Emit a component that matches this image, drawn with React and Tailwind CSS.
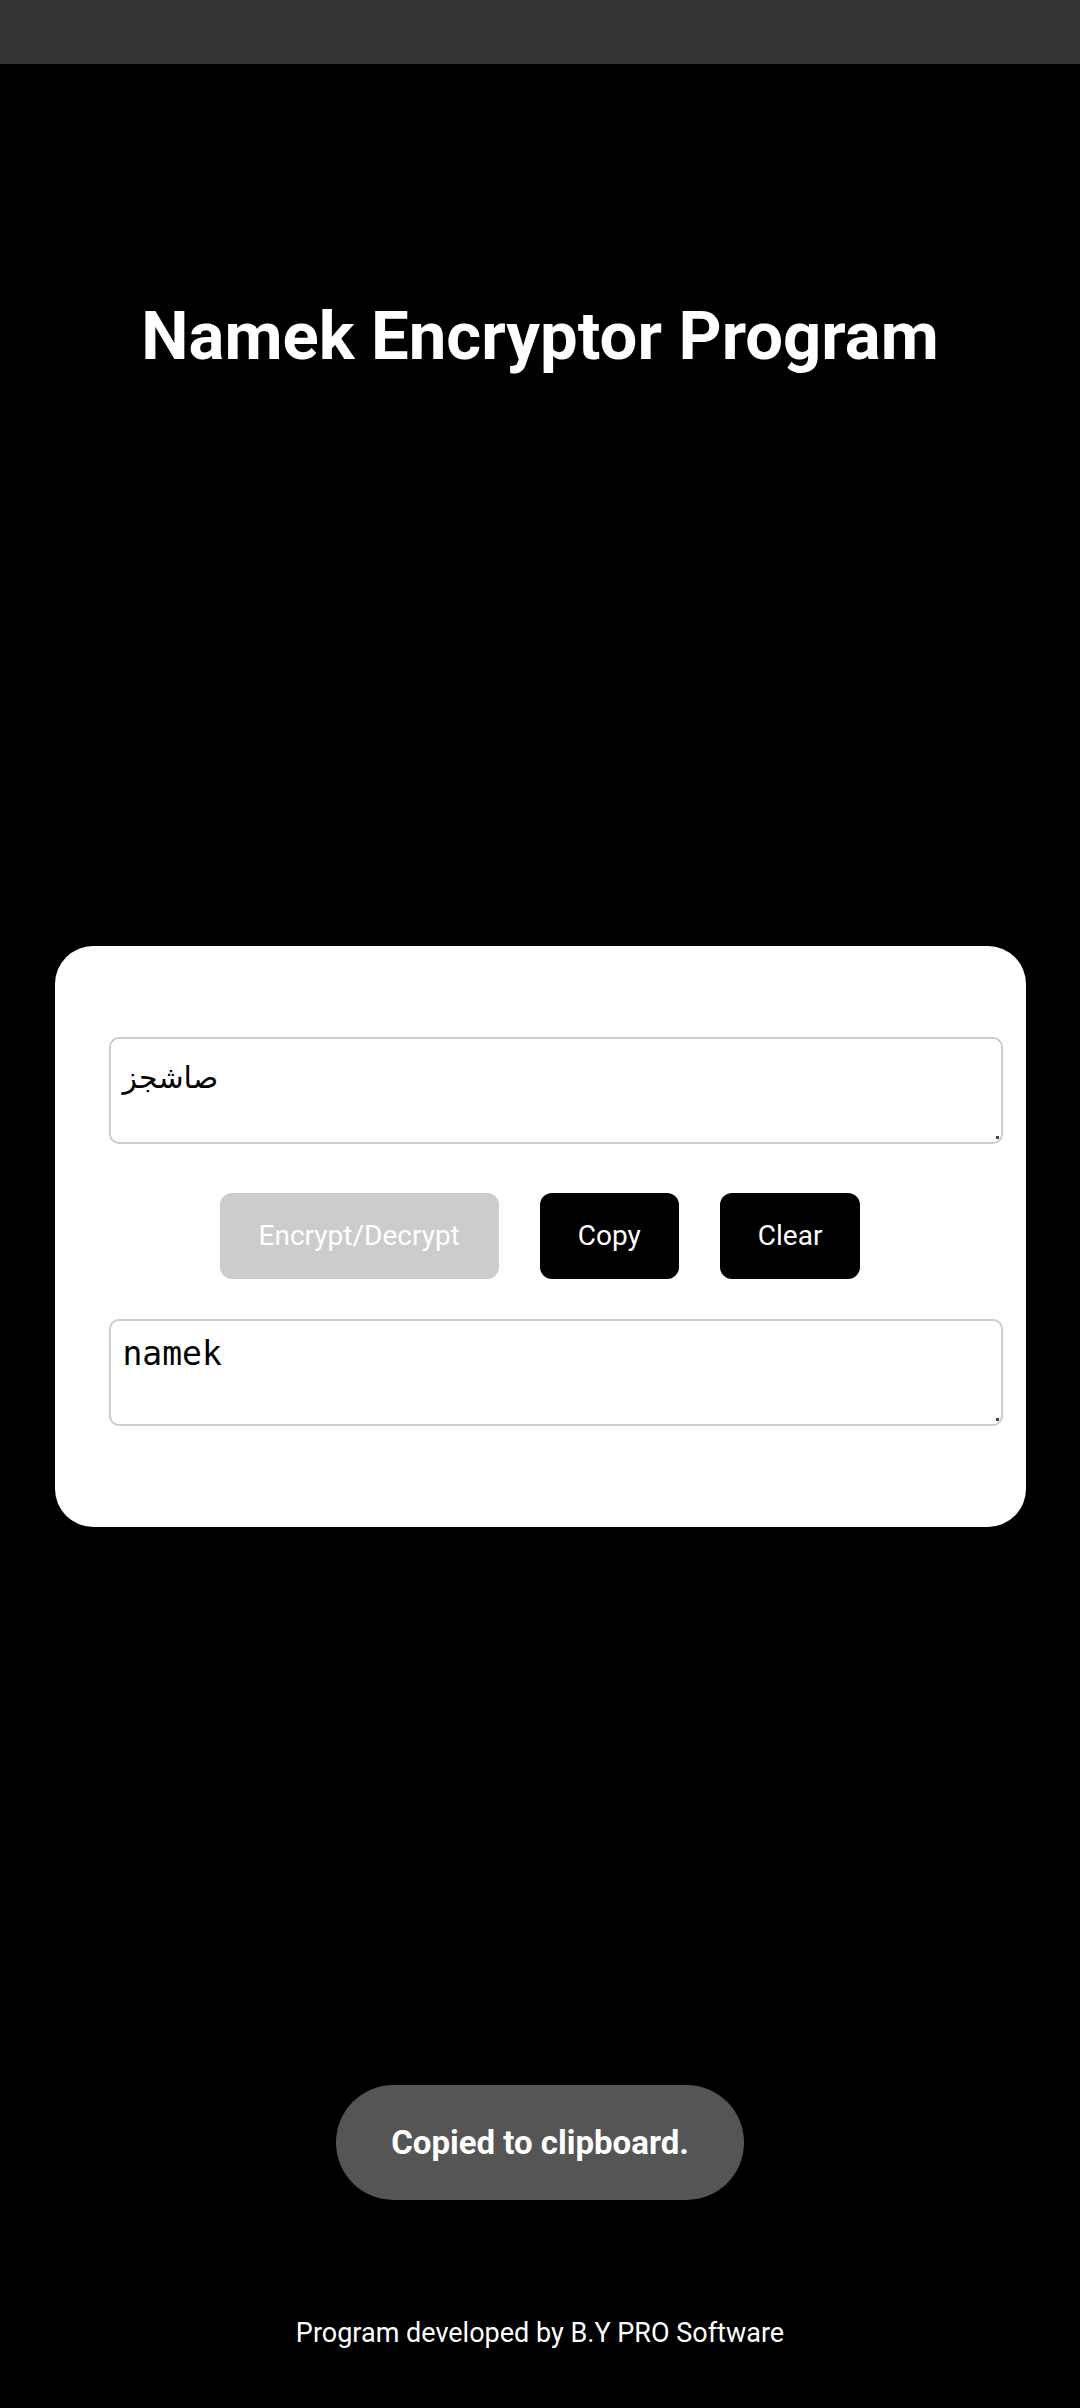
import React from 'react';

export default function App() {
  return (
    <div className="relative min-h-screen flex flex-col bg-black text-white font-['Roboto',sans-serif]">
      {/* status bar */}
      <div className="h-[64px] bg-[#333333] shrink-0" />

      <h1 className="mt-[230px] text-center text-[67px] leading-[84px] font-bold">
        Namek Encryptor Program
      </h1>

      {/* card */}
      <div className="mt-[568px] mx-auto w-[971px] bg-white rounded-[38px] pt-[91px] pb-[101px] px-[54px]">
        <div className="relative w-[894px]">
          <textarea
            readOnly
            value="صاشجز"
            className="block w-full h-[107px] resize-none border-2 border-[#cccccc] rounded-[10px] px-[12px] pt-[19px] text-[30px] leading-[40px] text-black font-['DejaVu_Sans',sans-serif] outline-none"
          />
          <span className="absolute right-[4px] bottom-[5px] w-[3px] h-[3px] bg-[#444]" />
        </div>

        <div className="mt-[49px] flex justify-center gap-[41px]">
          <button className="h-[86px] px-[39px] rounded-[12px] bg-[#cccccc] text-white text-[28px]">
            Encrypt/Decrypt
          </button>
          <button className="h-[86px] px-[38px] rounded-[12px] bg-black text-white text-[28px]">
            Copy
          </button>
          <button className="h-[86px] px-[38px] rounded-[12px] bg-black text-white text-[28px]">
            Clear
          </button>
        </div>

        <div className="relative mt-[40px] w-[894px]">
          <textarea
            readOnly
            value="namek"
            className="block w-full h-[107px] resize-none border-2 border-[#cccccc] rounded-[10px] px-[12px] pt-[13px] text-[33px] leading-[40px] text-black font-['DejaVu_Sans_Mono',monospace] outline-none"
          />
          <span className="absolute right-[4px] bottom-[5px] w-[3px] h-[3px] bg-[#444]" />
        </div>
      </div>

      {/* footer */}
      <p className="mt-auto pb-[55px] text-center text-[27px]">
        Program developed by B.Y PRO Software
      </p>

      {/* toast */}
      <div className="absolute left-1/2 -translate-x-1/2 top-[2085px] w-[408px] h-[115px] rounded-full bg-[#555555] flex items-center justify-center">
        <span className="text-[33px] font-bold text-white">Copied to clipboard.</span>
      </div>
    </div>
  );
}
